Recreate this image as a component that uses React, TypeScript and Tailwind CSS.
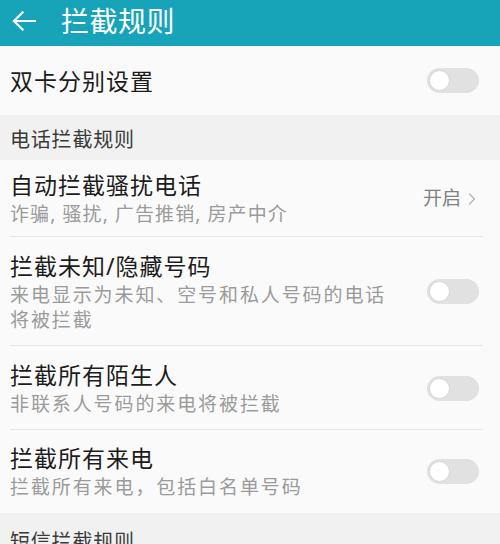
import { ChevronRight } from "lucide-react";

const FONT = "font-['Noto_Sans','Noto_Sans_CJK_SC',sans-serif]";

function Toggle() {
  return (
    <div className="flex h-[25px] w-[52px] shrink-0 items-center rounded-full bg-[#e1e1e1] pl-[2px]">
      <div className="h-[21px] w-[21px] rounded-full border border-[#d6d6d6] bg-white" />
    </div>
  );
}

function Row({ title, sub, right, h, divider = true, subTracking = "tracking-[1.9px]" }: { title: string; sub?: string[]; right: React.ReactNode; h: string; divider?: boolean; subTracking?: string }) {
  return (
    <div className={`relative flex items-center justify-between pl-[10px] pr-[21px] ${h}`}>
      <div className="flex flex-col">
        <div className="text-[23px] leading-[30px] tracking-[1px] text-[#1c1c1c]">{title}</div>
        {sub && (
          <div className="mt-[2px]">
            {sub.map((s) => (
              <div className={`text-[19px] leading-[25px] text-[#9b9b9b] ${subTracking}`} key={s}>{s}</div>
            ))}
          </div>
        )}
      </div>
      {right}
      {divider && <div className="absolute bottom-0 left-[10px] right-[17px] h-px bg-[#e6e6e6]" />}
    </div>
  );
}

function Section({ title, h }: { title: string; h: string }) {
  return (
    <div className={`flex items-center bg-[#f1f1f1] pl-[10px] pt-[4px] text-[20px] tracking-[0.8px] text-[#3a3a3a] ${h}`}>{title}</div>
  );
}

export default function App() {
  return (
    <div className={`h-[544px] w-[500px] overflow-hidden bg-[#fafafa] ${FONT}`}>
      <header className="flex h-[46px] items-center bg-[#17a4b9] pb-[4px] text-white">
        <svg className="ml-[12px]" width="24" height="20" viewBox="0 0 24 20" fill="none" stroke="white" strokeWidth="2.2" strokeLinecap="square">
          <path d="M2 10H23M10.5 1.5L2 10l8.5 8.5" />
        </svg>
        <span className="ml-[25px] text-[28px] tracking-[0.5px]">拦截规则</span>
      </header>
      <Row title="双卡分别设置" right={<Toggle />} h="h-[69px]" divider={false} />
      <Section title="电话拦截规则" h="h-[45px]" />
      <Row
        title="自动拦截骚扰电话"
        sub={["诈骗, 骚扰, 广告推销, 房产中介"]}
        subTracking="tracking-[1.1px]"
        right={
          <div className="flex items-center text-[19px] text-[#808080]">
            开启<ChevronRight className="-mr-[3px] ml-[1px] text-[#b5b5b5]" size={20} strokeWidth={1.5} />
          </div>
        }
        h="h-[77px]"
      />
      <Row title="拦截未知/隐藏号码" sub={["来电显示为未知、空号和私人号码的电话", "将被拦截"]} right={<Toggle />} h="h-[109px]" />
      <Row title="拦截所有陌生人" sub={["非联系人号码的来电将被拦截"]} right={<Toggle />} h="h-[84px]" />
      <Row title="拦截所有来电" sub={["拦截所有来电，包括白名单号码"]} right={<Toggle />} h="h-[83px]" divider={false} />
      <Section title="短信拦截规则" h="h-[45px] items-start pt-[14px]" />
    </div>
  );
}
